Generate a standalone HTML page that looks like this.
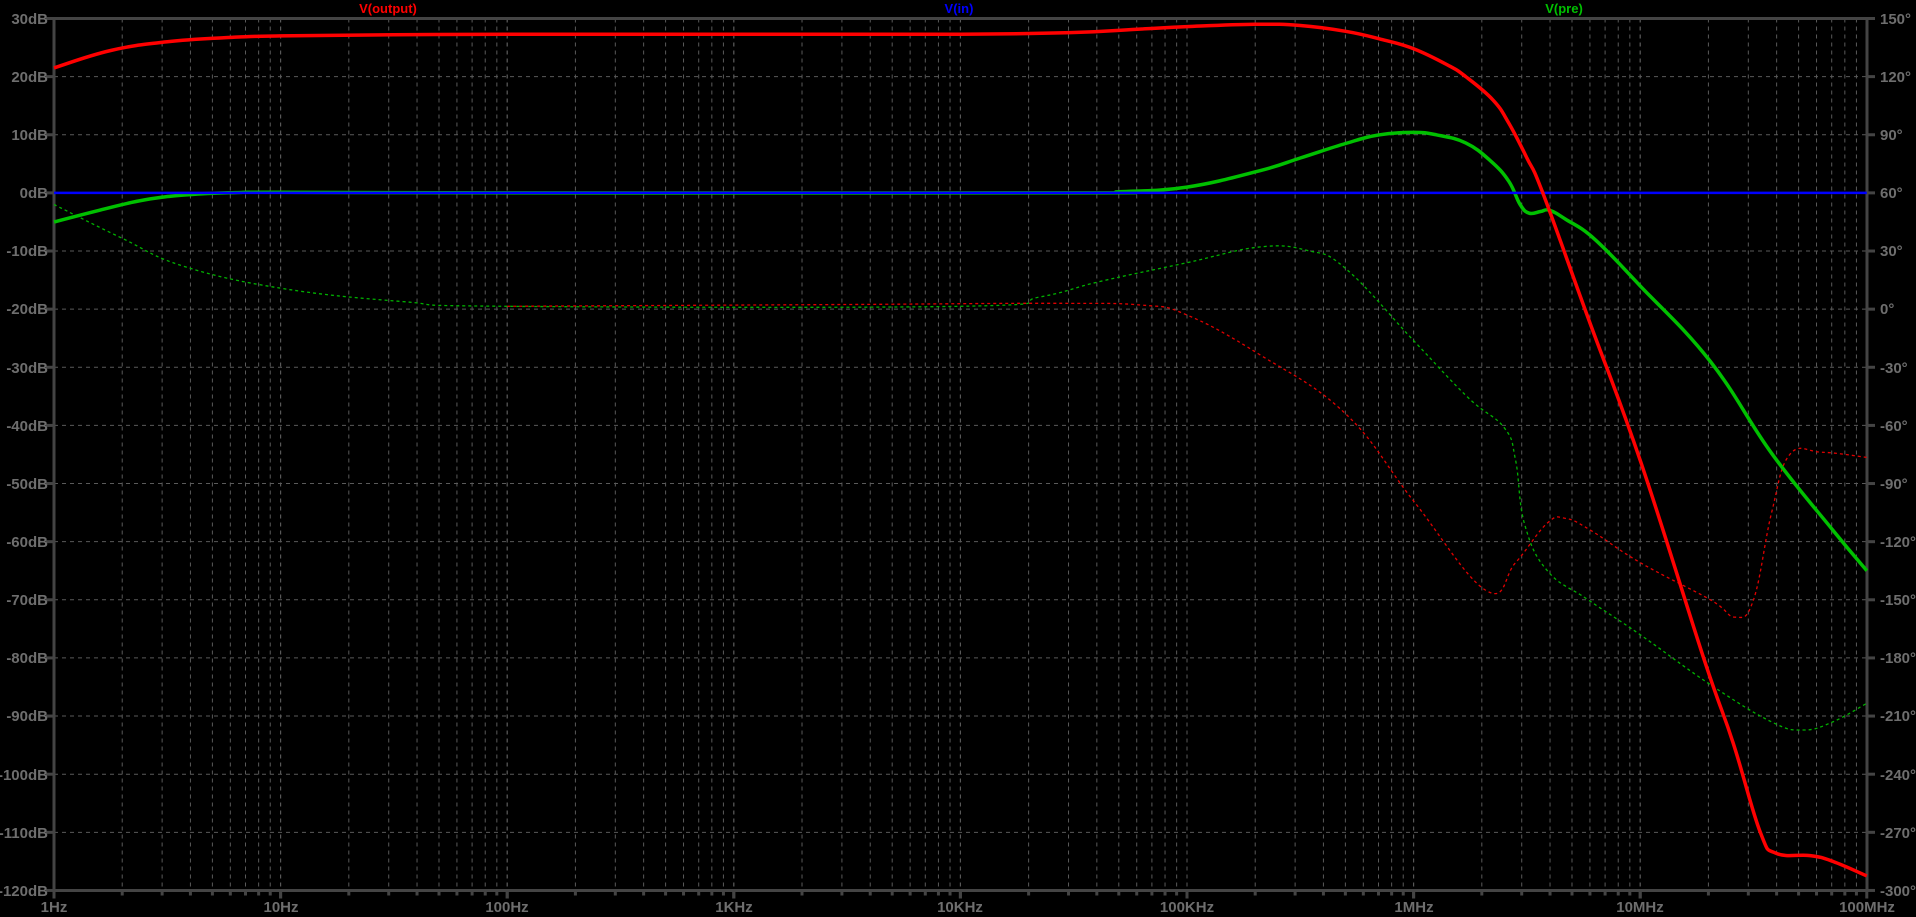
<!DOCTYPE html><html><head><meta charset="utf-8"><style>
html,body{margin:0;padding:0;background:#000;width:1916px;height:917px;overflow:hidden}
svg{display:block}
text{font-family:"Liberation Sans",sans-serif;font-weight:bold;font-size:15px;fill:#6e6e6e}
</style></head><body>
<svg id="s" width="1916" height="917" xmlns="http://www.w3.org/2000/svg">
<g id="grid"></g>
<g id="curves"></g>
<text x="388" y="13" text-anchor="middle" style="fill:#ff0000;font-size:13px">V(output)</text>
<text x="959" y="13" text-anchor="middle" style="fill:#0000ff;font-size:13px">V(in)</text>
<text x="1564" y="13" text-anchor="middle" style="fill:#00c000;font-size:13px">V(pre)</text>
<g text-anchor="end">
<text x="48" y="24">30dB</text><text x="48" y="82">20dB</text><text x="48" y="140">10dB</text><text x="48" y="198">0dB</text>
<text x="48" y="256">-10dB</text><text x="48" y="314">-20dB</text><text x="48" y="373">-30dB</text><text x="48" y="431">-40dB</text>
<text x="48" y="489">-50dB</text><text x="48" y="547">-60dB</text><text x="48" y="605">-70dB</text><text x="48" y="663">-80dB</text>
<text x="48" y="721">-90dB</text><text x="48" y="780">-100dB</text><text x="48" y="838">-110dB</text><text x="48" y="896">-120dB</text>
</g>
<g>
<text x="1880" y="24">150°</text><text x="1880" y="82">120°</text><text x="1880" y="140">90°</text><text x="1880" y="198">60°</text>
<text x="1880" y="256">30°</text><text x="1880" y="314">0°</text><text x="1880" y="373">-30°</text><text x="1880" y="431">-60°</text>
<text x="1880" y="489">-90°</text><text x="1880" y="547">-120°</text><text x="1880" y="605">-150°</text><text x="1880" y="663">-180°</text>
<text x="1880" y="721">-210°</text><text x="1880" y="780">-240°</text><text x="1880" y="838">-270°</text><text x="1880" y="896">-300°</text>
</g>
<g text-anchor="middle">
<text x="54" y="912">1Hz</text><text x="281" y="912">10Hz</text><text x="507" y="912">100Hz</text><text x="734" y="912">1KHz</text>
<text x="960" y="912">10KHz</text><text x="1187" y="912">100KHz</text><text x="1414" y="912">1MHz</text><text x="1640" y="912">10MHz</text><text x="1867" y="912">100MHz</text>
</g>
</svg>
<script>
var X=function(d){return 54+226.6*d},Y=function(v){return 192.9-5.813*v};
var L=54,R=1867,T=18.5,B=890.5,g='';
for(var k=0;k<=15;k++){var y=T+k*58.13;
 g+='<line x1="'+L+'" x2="'+R+'" y1="'+y+'" y2="'+y+'" stroke="#5a5a5a" stroke-dasharray="4 4"/>';
 g+='<line x1="'+(L-8)+'" x2="'+L+'" y1="'+y+'" y2="'+y+'" stroke="#444" stroke-width="3"/>';
 g+='<line x1="'+R+'" x2="'+(R+8)+'" y1="'+y+'" y2="'+y+'" stroke="#444" stroke-width="3"/>';}
for(var d=0;d<8;d++)for(var m=1;m<=10;m++){var x=X(d+Math.log10(m));
 g+='<line x1="'+x+'" x2="'+x+'" y1="'+T+'" y2="'+B+'" stroke="#5a5a5a" stroke-dasharray="4 4"/>';
 g+='<line x1="'+x+'" x2="'+x+'" y1="'+B+'" y2="'+(B+(m==1||m==10?8:5))+'" stroke="#444" stroke-width="3"/>';}
g+='<rect x="'+L+'" y="'+T+'" width="'+(R-L)+'" height="'+(B-T)+'" fill="none" stroke="#444" stroke-width="3"/>';
document.getElementById('grid').innerHTML=g;
function P(a){var p=a.map(function(q){return [X(q[0]),Y(q[1])]});
 var s='M'+p[0][0].toFixed(1)+' '+p[0][1].toFixed(1);
 for(var i=0;i<p.length-1;i++){var p0=p[i-1]||p[i],p1=p[i],p2=p[i+1],p3=p[i+2]||p2,t=0.2;
  s+='C'+(p1[0]+(p2[0]-p0[0])*t).toFixed(1)+' '+(p1[1]+(p2[1]-p0[1])*t).toFixed(1)+' '+(p2[0]-(p3[0]-p1[0])*t).toFixed(1)+' '+(p2[1]-(p3[1]-p1[1])*t).toFixed(1)+' '+p2[0].toFixed(1)+' '+p2[1].toFixed(1);}
 return s;}
var red=[[0,21.5],[0.25,24.5],[0.5,26],[0.75,26.7],[1,27],[1.5,27.2],[2,27.3],[3,27.3],[4,27.3],[4.5,27.6],[4.8,28.2],[5,28.6],[5.3,29],[5.5,28.8],[5.7,27.8],[5.85,26.5],[6,24.8],[6.15,22],[6.23,20],[6.35,16],[6.42,12],[6.5,6],[6.57,0],[6.77,-21.5],[7,-46],[7.28,-80],[7.41,-94.6],[7.53,-110],[7.6,-113.6],[7.75,-114],[7.85,-115],[8,-117.5]];
var grn=[[0,-5],[0.2,-3],[0.4,-1.2],[0.6,-0.3],[0.8,0.05],[1,0.1],[2,0],[4.5,0],[4.7,0.2],[5,1],[5.32,3.8],[5.5,6],[5.7,8.5],[5.85,10],[6,10.4],[6.1,10],[6.23,8.6],[6.34,5.5],[6.42,2],[6.47,-2],[6.51,-3.5],[6.56,-3.2],[6.6,-3],[6.67,-4.5],[6.8,-8],[7,-16],[7.31,-29],[7.58,-44.8],[7.85,-58],[8,-65]];
var rph=[[2,-19.5],[3.5,-19.2],[4.4,-19],[4.8,-19.3],[5,-21],[5.32,-27.8],[5.7,-38],[6,-53],[6.32,-68.4],[6.45,-63.6],[6.59,-56.8],[6.67,-56],[6.78,-58],[7,-63.6],[7.31,-70],[7.42,-73],[7.5,-70],[7.58,-55],[7.66,-45],[7.8,-44.6],[8,-45.5]];
var gph=[[0,-2],[0.3,-7.8],[0.57,-12.6],[1,-16.4],[1.54,-18.7],[2,-19.5],[4,-19.5],[4.35,-17.9],[4.62,-15.2],[5,-12],[5.32,-9.3],[5.53,-9.9],[5.7,-13],[6,-25.4],[6.24,-35.2],[6.4,-40.4],[6.45,-46],[6.49,-57],[6.59,-65],[6.77,-70],[7,-76],[7.31,-84.6],[7.58,-91],[7.72,-92.4],[7.85,-91],[8,-87.8]];
var c='';
c+='<path d="'+P(rph)+'" fill="none" stroke="#e00000" stroke-width="1.3" stroke-dasharray="3 3"/>';
c+='<path d="'+P(gph)+'" fill="none" stroke="#00b000" stroke-width="1.3" stroke-dasharray="3 3"/>';
c+='<path d="'+P(grn)+'" fill="none" stroke="#00c000" stroke-width="3.5" stroke-linejoin="round"/>';
c+='<path d="M'+X(0)+' '+Y(0)+'L'+X(8)+' '+Y(0)+'" stroke="#0000ff" stroke-width="2.5"/>';
c+='<path d="'+P(red)+'" fill="none" stroke="#ff0000" stroke-width="3.5" stroke-linejoin="round"/>';
document.getElementById('curves').innerHTML=c;
</script>
</body></html>
